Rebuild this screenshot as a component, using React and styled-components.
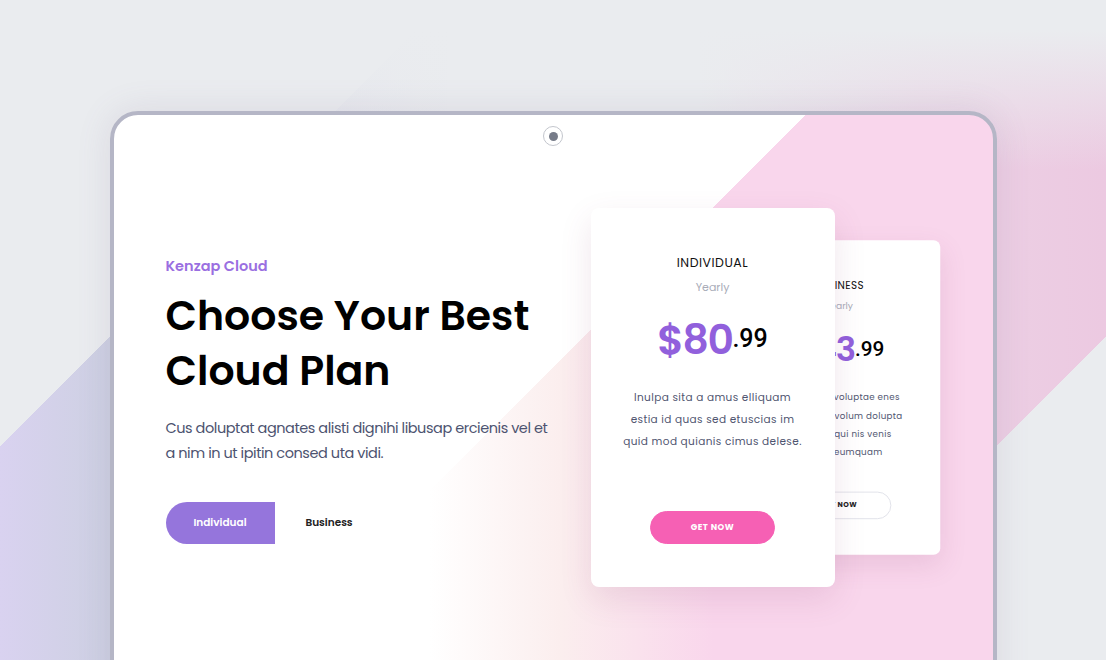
import React from "react"
import styled, { createGlobalStyle } from "styled-components"

const GlobalStyle = createGlobalStyle`
  * {
    box-sizing: border-box;
  }
  body {
    margin: 0;
    height: 660px;
    overflow: hidden;
    font-family: "Poppins", Inter, "Noto Sans", sans-serif;
    background:
      linear-gradient(to bottom, #eaecef 30px, rgba(234, 236, 239, 0) 170px),
      linear-gradient(
        135deg,
        #eaecef 316px,
        rgba(234, 236, 239, 0) 316px,
        rgba(234, 236, 239, 0) 1020px,
        #eaecef 1020px
      ),
      linear-gradient(
        to right,
        #d9d2f0 0,
        #cdd0e2 110px,
        #e3e4ec 300px,
        #eaecef 450px,
        #eaecef 700px,
        #ecd2e5 920px,
        #ecc9e1 1106px
      );
  }
`

const Page = styled.main`
  padding-top: 111px;
`

const Device = styled.section`
  width: 887px;
  height: 620px;
  margin: 0 auto;
  border: 4px solid #b5b6c6;
  border-radius: 28px;
  padding-top: 11px;
  box-shadow: 0 0 34px rgba(120, 100, 140, 0.14);
  background:
    linear-gradient(135deg, #fff 489px, rgba(255, 255, 255, 0) 489px),
    linear-gradient(to right, #fff 316px, #fbeeee 446px, #f9d6ec 600px);
`

const Camera = styled.div`
  width: 20px;
  height: 20px;
  margin: 0 auto;
  border: 1px solid #c3c6cd;
  border-radius: 50%;
  background: #fff;
  display: grid;
  place-items: center;

  &::after {
    content: "";
    width: 9px;
    height: 9px;
    border-radius: 50%;
    background: #777c89;
  }
`

const Content = styled.div`
  margin-top: 62px;
  padding-left: 52px;
  display: flex;
  align-items: center;
`

const Intro = styled.div`
  width: 425px;
  padding-top: 5px;
`

const Eyebrow = styled.div`
  font-size: 14.5px;
  line-height: 20px;
  font-weight: 600;
  color: #9a6fe1;
`

const Title = styled.h1`
  margin: 12px 0 0;
  font-size: 41px;
  line-height: 55px;
  font-weight: 600;
  color: #000;
`

const Lead = styled.p`
  margin: 18px 0 0;
  width: 390px;
  font-size: 14.5px;
  line-height: 25px;
  letter-spacing: -0.45px;
  color: #4d5370;
`

const Toggle = styled.div`
  margin-top: 36px;
  display: flex;
`

const Segment = styled.button`
  width: 109px;
  height: 42px;
  border: 0;
  padding: 0;
  font-family: inherit;
  font-size: 10.5px;
  font-weight: 600;
  cursor: pointer;
  border-radius: 21px 0 0 21px;
  background: ${({ active }) => (active ? "#9575dc" : "transparent")};
  color: ${({ active }) => (active ? "#fff" : "#222")};
`

const Stage = styled.div`
  display: flex;
  align-items: center;
`

const Card = styled.div`
  position: relative;
  z-index: ${({ back }) => (back ? 1 : 2)};
  width: 244px;
  height: 379px;
  flex-shrink: 0;
  padding: 47px 0 43px;
  display: flex;
  flex-direction: column;
  align-items: center;
  text-align: center;
  background: #fff;
  border-radius: 8px;
  box-shadow: 0 12px 32px rgba(140, 60, 110, 0.13);
  ${({ back }) => back && "margin-left: -118px; transform: scale(0.83);"}
`

const PlanName = styled.div`
  font-size: 12.5px;
  line-height: 16px;
  letter-spacing: 0.5px;
  color: #111;
`

const Period = styled.div`
  margin-top: 8px;
  font-size: 11px;
  line-height: 16px;
  color: #a9acb8;
`

const Price = styled.div`
  margin-top: 19px;
  line-height: 50px;
  white-space: nowrap;
`

const Amount = styled.span`
  font-size: 41px;
  font-weight: 600;
  letter-spacing: -1.5px;
  color: #9160dc;
`

const Cents = styled.span`
  font-family: Roboto, Arial, sans-serif;
  font-size: 25px;
  font-weight: 500;
  color: #000;
  vertical-align: 7px;
`

const Desc = styled.p`
  margin: 13px 0 0;
  font-size: 10.5px;
  line-height: 22px;
  letter-spacing: 0.4px;
  color: #4f5570;
`

const GetButton = styled.button`
  margin-top: auto;
  width: 125px;
  height: 33px;
  border-radius: 17px;
  font-family: inherit;
  font-size: 8.5px;
  font-weight: 700;
  letter-spacing: 0.5px;
  cursor: pointer;
  border: 1px solid ${({ outline }) => (outline ? "#dcdde6" : "#f660b4")};
  background: ${({ outline }) => (outline ? "#fff" : "#f660b4")};
  color: ${({ outline }) => (outline ? "#222" : "#fff")};
`

const plans = [
  {
    name: "INDIVIDUAL",
    amount: "$80",
    lines: ["Inulpa sita a amus elliquam", "estia id quas sed etuscias im", "quid mod quianis cimus delese."],
  },
  {
    name: "BUSINESS",
    amount: "$43",
    lines: ["Nemo sit ut voluptae enes", "sectatem et volum dolupta", "doloremo qui nis venis", "ut unde eumquam"],
    back: true,
  },
]

const PlanCard = ({ plan }) => (
  <Card back={plan.back}>
    <PlanName>{plan.name}</PlanName>
    <Period>Yearly</Period>
    <Price>
      <Amount>{plan.amount}</Amount>
      <Cents>.99</Cents>
    </Price>
    <Desc>
      {plan.lines.map((l, i) => (
        <React.Fragment key={i}>
          {l}
          {i < plan.lines.length - 1 && <br />}
        </React.Fragment>
      ))}
    </Desc>
    <GetButton outline={plan.back}>GET NOW</GetButton>
  </Card>
)

export default function App() {
  return (
    <Page>
      <GlobalStyle />
      <Device>
        <Camera />
        <Content>
          <Intro>
            <Eyebrow>Kenzap Cloud</Eyebrow>
            <Title>
              Choose Your Best
              <br />
              Cloud Plan
            </Title>
            <Lead>Cus doluptat agnates alisti dignihi libusap ercienis vel et a nim in ut ipitin consed uta vidi.</Lead>
            <Toggle>
              <Segment active>Individual</Segment>
              <Segment>Business</Segment>
            </Toggle>
          </Intro>
          <Stage>
            {plans.map((p) => (
              <PlanCard key={p.name} plan={p} />
            ))}
          </Stage>
        </Content>
      </Device>
    </Page>
  )
}
